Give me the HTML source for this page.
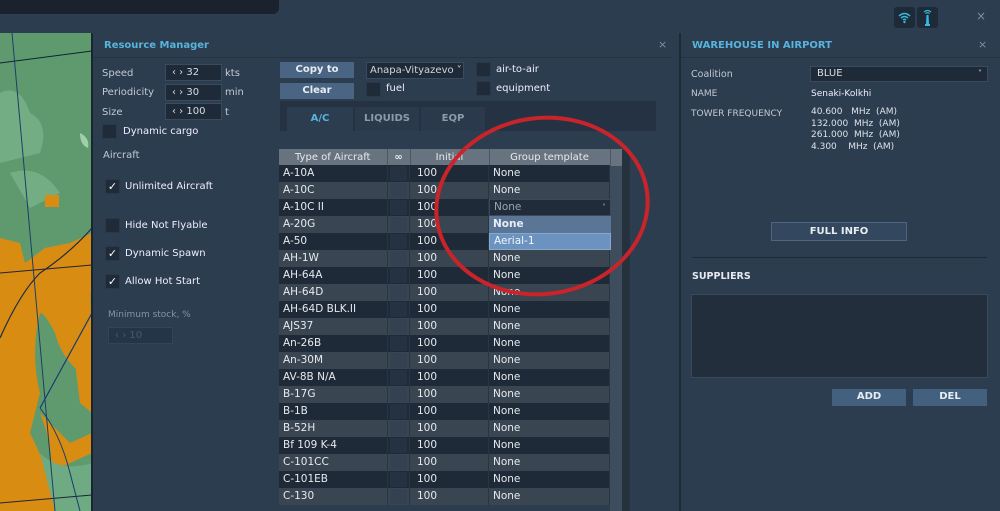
<!DOCTYPE html>
<html><head><meta charset="utf-8"><style>
*{margin:0;padding:0;box-sizing:border-box}
body{width:1000px;height:511px;overflow:hidden;background:#2d3d50;font-family:"DejaVu Sans","Liberation Sans",sans-serif;font-size:10px;color:#d8dde3;position:relative}
.a{position:absolute}
.lbl{color:#c2c9d1;font-size:10px}
.inp{background:#1e2a38;border:1px solid #3a4b5e;color:#d8dde3;font-size:10px;padding-left:6px;line-height:15px;height:17px}
.cb{width:15px;height:15px;background:#1f2b39;border:1px solid #2a3849}
.btn{background:#4a6583;color:#e8edf2;font-weight:bold;text-align:center;font-size:10px;line-height:15px}
.btn2{background:#3f5670;color:#e8edf2;font-weight:bold;text-align:center;font-size:10px;border:1px solid #4e6580}
.t{color:#eef;font-size:10px}
table{border-collapse:collapse}
td{height:17px;font-size:10px;color:#e6eaee;padding:0 4px;white-space:nowrap}
</style></head><body>
<div class="a" style="left:0;top:0;width:279px;height:14px;background:#1a222d;border-radius:0 0 6px 0"></div>
<!-- map (svg coords = page y - 33) -->
<svg class="a" style="left:0;top:33px" width="92" height="478" viewBox="0 0 92 478">
<rect width="92" height="478" fill="#5f9a6e"/>
<path d="M0 60 Q20 50 30 80 Q50 90 40 120 L0 130Z" fill="#73ad83"/>
<path d="M10 140 Q40 130 60 160 L30 175 Z" fill="#73ad83"/>
<rect x="45" y="162" width="14" height="12" fill="#d88c12"/>
<path d="M0 205 L20 210 L25 230 L45 215 L70 210 L92 200 L92 260 Q70 260 55 255 L40 250 L0 260Z" fill="#d88c12"/>
<path d="M0 240 L40 245 L40 280 Q30 320 40 360 L30 400 Q50 440 60 478 L0 478Z" fill="#d88c12"/>
<path d="M40 245 L90 240 L92 330 L75 335 Q60 320 55 300 Q45 280 40 280Z" fill="#d88c12"/>
<path d="M75 330 L92 325 L92 380 L80 370Z" fill="#d88c12"/>
<path d="M40 380 Q55 420 50 440 L70 430 L92 420 L92 400 L70 410Z" fill="#d88c12"/>
<path d="M40 420 Q60 440 92 430 L92 478 L55 478Z" fill="#6eaa82"/>
<path d="M80 100 Q90 105 88 115 Q80 112 80 100Z" fill="#a0d0aa"/>
<path d="M0 30 L92 18" stroke="#123" stroke-width="1"/>
<path d="M0 240 L92 232" stroke="#223" stroke-width="1"/>
<path d="M0 470 L92 462" stroke="#223" stroke-width="1"/>
<path d="M12 0 L55 478" stroke="#1d3d6a" stroke-width="1"/>
<path d="M0 305 Q20 260 40 240 Q70 220 92 195" stroke="#1c2a4a" stroke-width="1.2" fill="none"/>
<path d="M40 375 Q70 320 92 280" stroke="#1c3a70" stroke-width="1.2" fill="none"/>
<path d="M40 375 Q60 400 70 440 L80 478" stroke="#1c3a70" stroke-width="1" fill="none"/>
</svg>
<div class="a" style="left:91px;top:33px;width:2px;height:478px;background:#1b2532"></div>
<!-- resource manager -->
<div class="a" style="left:104px;top:40px;font-weight:bold;color:#57b4dc;font-size:10px">Resource Manager</div>
<div class="a" style="left:658px;top:38px;color:#7f8d9b;font-size:11px">×</div>
<div class="a" style="left:93px;top:57px;width:578px;height:1px;background:#25333f"></div>
<div class="a lbl" style="left:102px;top:68px">Speed</div>
<div class="a lbl" style="left:102px;top:87px">Periodicity</div>
<div class="a lbl" style="left:102px;top:107px">Size</div>
<div class="a inp" style="left:165px;top:64px;width:57px">‹ › 32</div>
<div class="a inp" style="left:165px;top:84px;width:57px">‹ › 30</div>
<div class="a inp" style="left:165px;top:103px;width:57px">‹ › 100</div>
<div class="a lbl" style="left:225px;top:68px">kts</div>
<div class="a lbl" style="left:225px;top:87px">min</div>
<div class="a lbl" style="left:225px;top:107px">t</div>
<div class="a cb" style="left:102px;top:124px"></div>
<div class="a t" style="left:123px;top:126px">Dynamic cargo</div>
<div class="a lbl" style="left:103px;top:150px">Aircraft</div>
<div class="a cb" style="left:105px;top:179px;color:#fff;font-size:11px;line-height:13px;text-align:center">✓</div>
<div class="a t" style="left:125px;top:181px">Unlimited Aircraft</div>
<div class="a cb" style="left:105px;top:218px"></div>
<div class="a t" style="left:125px;top:220px">Hide Not Flyable</div>
<div class="a cb" style="left:105px;top:246px;color:#fff;font-size:11px;line-height:13px;text-align:center">✓</div>
<div class="a t" style="left:125px;top:248px">Dynamic Spawn</div>
<div class="a cb" style="left:105px;top:274px;color:#fff;font-size:11px;line-height:13px;text-align:center">✓</div>
<div class="a t" style="left:125px;top:276px">Allow Hot Start</div>
<div class="a" style="left:108px;top:310px;color:#8593a2;font-size:9px">Minimum stock, %</div>
<div class="a inp" style="left:108px;top:327px;width:65px;color:#4b5a6a;border-color:#33435a;background:#26344a">‹ › 10</div>
<div class="a btn" style="left:280px;top:62px;width:74px;height:16px">Copy to</div>
<div class="a btn" style="left:280px;top:83px;width:74px;height:16px">Clear</div>
<div class="a inp" style="left:366px;top:62px;width:98px;color:#cfd6dd;padding-left:3px">Anapa-Vityazevo ˅</div>
<div class="a cb" style="left:366px;top:82px"></div>
<div class="a t" style="left:386px;top:83px">fuel</div>
<div class="a cb" style="left:476px;top:62px"></div>
<div class="a t" style="left:496px;top:64px">air-to-air</div>
<div class="a cb" style="left:476px;top:81px"></div>
<div class="a t" style="left:496px;top:83px">equipment</div>
<div class="a" style="left:280px;top:101px;width:376px;height:30px;background:#253243"></div>
<div class="a" style="left:287px;top:107px;width:66px;height:24px;background:#2d3d50;color:#57b4dc;font-weight:bold;text-align:center;line-height:24px">A/C</div>
<div class="a" style="left:355px;top:107px;width:64px;height:24px;background:#2a394b;color:#8d9aa8;font-weight:bold;text-align:center;line-height:24px">LIQUIDS</div>
<div class="a" style="left:421px;top:107px;width:64px;height:24px;background:#2a394b;color:#8d9aa8;font-weight:bold;text-align:center;line-height:24px">EQP</div>
<!-- table -->
<div class="a" style="left:610px;top:150px;width:12px;height:361px;background:#3d4d5e"></div>
<div class="a" style="left:622px;top:150px;width:8px;height:361px;background:#26313e"></div>
<table class="a" style="left:279px;top:149px;width:343px">
<tr style="background:#687380;height:16px"><td style="width:108px;text-align:center;border-right:1px solid #4c5765;height:16px">Type of Aircraft</td><td style="width:23px;text-align:center;border-right:1px solid #4c5765;font-weight:bold">∞</td><td style="width:79px;text-align:center;border-right:1px solid #4c5765">Initial</td><td style="width:121px;text-align:center;border-right:1px solid #4c5765">Group template</td><td style="width:12px"></td></tr>
</table>
<div id="rows" class="a" style="left:279px;top:165px;width:331px"></div>
<script>
var n=["A-10A","A-10C","A-10C II","A-20G","A-50","AH-1W","AH-64A","AH-64D","AH-64D BLK.II","AJS37","An-26B","An-30M","AV-8B N/A","B-17G","B-1B","B-52H","Bf 109 K-4","C-101CC","C-101EB","C-130"];
var h="";n.forEach(function(s,i){var bg=i%2?"#3a4552":"#1f2a38";var g="None";if(i==3||i==4)g="";
h+='<div style="position:relative;height:17px;background:'+bg+';font-size:10.5px;color:#e6eaee;line-height:17px"><span style="position:absolute;left:4px">'+s+'</span><span style="position:absolute;left:108px;top:0;width:23px;height:17px;border-left:1px solid #2a3542;border-right:1px solid #2a3542"><span style="position:absolute;left:2px;top:1px;width:17px;height:15px;background:'+(i%2?"#344150":"#253242")+'"></span></span><span style="position:absolute;left:131px;width:79px;height:17px;border-right:1px solid #2a3542"></span><span style="position:absolute;left:138px">100</span><span style="position:absolute;left:214px">'+g+'</span><span style="position:absolute;left:210px;width:121px;height:17px;border-right:1px solid #2a3542"></span></div>';});
document.getElementById("rows").innerHTML=h;
</script>
<div class="a" style="left:489px;top:199px;width:122px;height:17px;background:#202c3a;border:1px solid #3a4a5c;color:#9aa5b0;line-height:15px;padding-left:4px;font-size:10.5px">None<span style="position:absolute;right:4px;font-size:8px">˅</span></div>
<div class="a" style="left:489px;top:216px;width:122px;height:17px;background:#5a7595;color:#e8eef4;font-weight:bold;line-height:17px;padding-left:4px;font-size:10.5px">None</div>
<div class="a" style="left:489px;top:233px;width:122px;height:17px;background:#6c93bf;color:#f2f6fa;line-height:15px;padding-left:4px;border:1px solid #86a8cf;font-size:10.5px">Aerial-1</div>
<!-- red circle -->
<svg class="a" style="left:430px;top:110px" width="230" height="200"><ellipse cx="112" cy="96" rx="106" ry="88" fill="none" stroke="#c8242a" stroke-width="4" transform="rotate(-8 112 96)"/></svg>
<!-- divider -->
<div class="a" style="left:679px;top:33px;width:2px;height:478px;background:#1f2a37"></div>
<!-- top icons -->
<div class="a" style="left:894px;top:7px;width:21px;height:21px;background:#1d2a38;border-radius:3px">
<svg width="21" height="21"><path d="M5 9 Q10.5 4 16 9 M7 11 Q10.5 8 14 11 M9 13 Q10.5 11.5 12 13" stroke="#38b8e0" stroke-width="1.5" fill="none"/><circle cx="10.5" cy="15" r="1.2" fill="#38b8e0"/></svg></div>
<div class="a" style="left:917px;top:7px;width:21px;height:21px;background:#1d2a38;border-radius:3px">
<svg width="21" height="21"><path d="M7 5 Q10.5 2 14 5 M8.5 6.5 Q10.5 5 12.5 6.5" stroke="#38b8e0" stroke-width="1.2" fill="none"/><path d="M9.5 8 L11.5 8 L12 17 L9 17Z" fill="#38b8e0"/><rect x="8" y="17" width="5" height="2" fill="#38b8e0"/></svg></div>
<div class="a" style="left:976px;top:9px;color:#7f8d9b;font-size:12px">×</div>
<!-- warehouse -->
<div class="a" style="left:692px;top:40px;font-weight:bold;color:#57b4dc;font-size:10px">WAREHOUSE IN AIRPORT</div>
<div class="a" style="left:978px;top:38px;color:#7f8d9b;font-size:11px">×</div>
<div class="a" style="left:681px;top:57px;width:319px;height:1px;background:#25333f"></div>
<div class="a lbl" style="left:691px;top:69px;font-size:9.5px">Coalition</div>
<div class="a inp" style="left:810px;top:66px;width:178px;height:16px;line-height:14px;color:#d8dde3">BLUE<span style="position:absolute;right:5px;font-size:8px">˅</span></div>
<div class="a lbl" style="left:691px;top:89px;font-size:9px">NAME</div>
<div class="a t" style="left:811px;top:89px;font-size:9px">Senaki-Kolkhi</div>
<div class="a lbl" style="left:691px;top:109px;font-size:9px">TOWER FREQUENCY</div>
<div class="a" style="left:811px;top:107px;font-size:9px;line-height:11.5px;color:#dde2e7;white-space:pre">40.600   MHz  (AM)
132.000  MHz  (AM)
261.000  MHz  (AM)
4.300    MHz  (AM)</div>
<div class="a btn2" style="left:771px;top:222px;width:136px;height:19px;line-height:17px;background:#33485f">FULL INFO</div>
<div class="a" style="left:692px;top:257px;width:295px;height:1px;background:#1f2a36"></div>
<div class="a" style="left:692px;top:271px;font-weight:bold;font-size:9.5px;color:#e6eaee">SUPPLIERS</div>
<div class="a" style="left:691px;top:294px;width:297px;height:84px;background:#222e3c;border:1px solid #3a4a5c"></div>
<div class="a btn2" style="left:832px;top:389px;width:74px;height:17px;line-height:15px;background:#44607f;border:none">ADD</div>
<div class="a btn2" style="left:913px;top:389px;width:74px;height:17px;line-height:15px;background:#44607f;border:none">DEL</div>
</body></html>
